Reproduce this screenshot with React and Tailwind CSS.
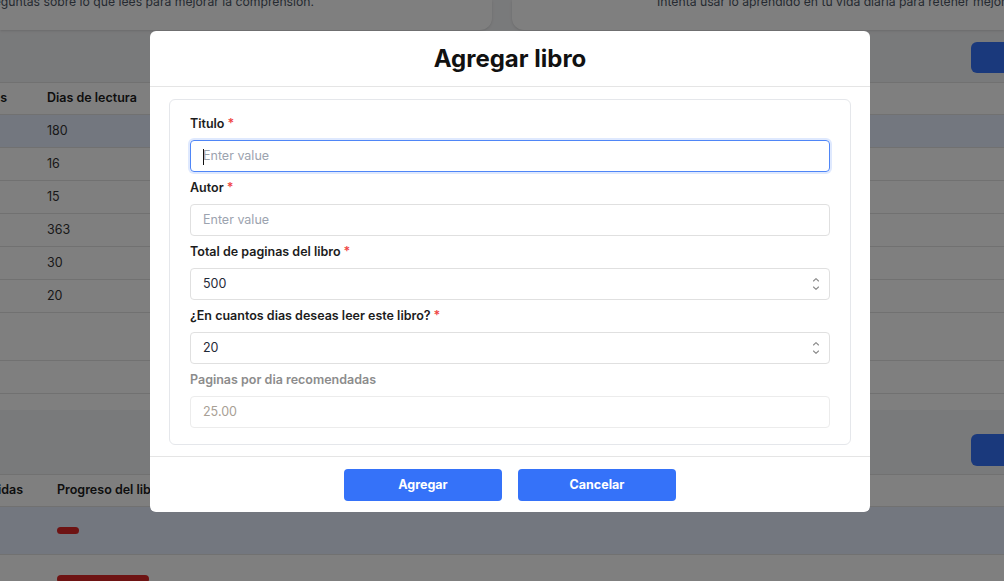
import React from "react";

function Spinner() {
  return (
    <svg width="8" height="14" viewBox="0 0 8 14" className="text-[#8a8a8a]" fill="none" stroke="currentColor" strokeWidth="1.1" strokeLinecap="round" strokeLinejoin="round">
      <path d="M1.5 4 L4 1.6 L6.5 4" />
      <path d="M1.5 10 L4 12.4 L6.5 10" />
    </svg>
  );
}

function Field({ label, required = true, muted = false, children }) {
  return (
    <div className="flex flex-col">
      <div className={`h-6 flex items-center mb-1 text-[12.5px] font-semibold ${muted ? "text-[#8c8c8c]" : "text-[#1c1c1c]"}`}>
        {label}
        {required && <span className="text-[#ef4444] ml-[3px]">*</span>}
      </div>
      {children}
    </div>
  );
}

function Row({ children, hl = false, h = "h-[33px]" }) {
  return (
    <div className={`${h} flex items-center border-b border-[#e3e3e3] ${hl ? "bg-[#e6eefe]" : "bg-white"}`}>
      {children}
    </div>
  );
}

export default function App() {
  const days = ["180", "16", "15", "363", "30", "20"];
  return (
    <div className="relative w-[1004px] h-[581px] overflow-hidden bg-[#f3f4f6] font-['Inter',_sans-serif]">
      {/* Background page */}
      <div className="flex flex-col">
        <div className="h-[30px] flex gap-5">
          <div className="w-[492px] h-[30px] bg-white rounded-br-xl shadow-sm flex justify-end pr-[178px] overflow-hidden">
            <div className="-mt-[6px] leading-4 text-[12.2px] text-[#4b5563] whitespace-nowrap">
              Haz preguntas sobre lo que lees para mejorar la comprensión.
            </div>
          </div>
          <div className="flex-1 h-[30px] bg-white rounded-bl-xl shadow-sm flex overflow-hidden pl-[145px]">
            <div className="-mt-[6px] leading-4 text-[12.2px] text-[#4b5563] whitespace-nowrap">
              Intenta usar lo aprendido en tu vida diaria para retener mejor
            </div>
          </div>
        </div>
        <div className="h-[52px] flex justify-end items-start pt-3">
          <div className="w-[33px] h-[31px] bg-[#3572f9] rounded-l-md" />
        </div>
        <div className="border-t border-[#e3e3e3] bg-white">
          <Row h="h-[32px]">
            <div className="w-[47px] overflow-hidden flex justify-end">
              <span className="whitespace-nowrap text-[12.5px] font-semibold text-[#1c1c1c] mr-[40px]">Paginas leidas</span>
            </div>
            <div className="text-[12.5px] font-semibold text-[#1c1c1c]">Dias de lectura</div>
          </Row>
          {days.map((d, i) => (
            <Row key={i} hl={i === 0}>
              <div className="w-[47px]" />
              <div className="text-[12.5px] text-[#333]">{d}</div>
            </Row>
          ))}
          <Row h="h-[48px]" />
          <Row />
          <div className="h-[16px] bg-white" />
        </div>
        <div className="h-[64px] flex justify-end items-start pt-[24px]">
          <div className="w-[33px] h-[32px] bg-[#3572f9] rounded-l-md" />
        </div>
        <div className="border-t border-[#e3e3e3] bg-white">
          <Row h="h-[32px]">
            <div className="w-[57px] overflow-hidden flex justify-end">
              <span className="whitespace-nowrap text-[12.5px] font-semibold text-[#1c1c1c] mr-[34px]">Paginas leidas</span>
            </div>
            <div className="text-[12.5px] font-semibold text-[#1c1c1c] whitespace-nowrap">Progreso del libro</div>
          </Row>
          <Row hl h="h-[48px]">
            <div className="w-[57px]" />
            <div className="w-[22px] h-[7px] rounded-full bg-[#dc2626]" />
          </Row>
          <div className="h-[40px] bg-white flex items-start pt-[20px]">
            <div className="w-[57px]" />
            <div className="w-[92px] h-[8px] rounded-full bg-[#dc2626]" />
          </div>
        </div>
      </div>

      {/* Overlay */}
      <div className="absolute inset-0 bg-black/50" />

      {/* Modal */}
      <div className="absolute left-[150px] top-[31px] w-[720px] h-[481px] bg-white rounded-md flex flex-col">
        <div className="h-[56px] flex items-center justify-center border-b border-[#e5e5e5]">
          <h2 className="text-[24px] font-bold text-[#111]">Agregar libro</h2>
        </div>
        <div className="pt-3 px-[19px] pb-[11px]">
          <div className="border border-[#e5e7eb] rounded-md pt-3 px-5 pb-4 flex flex-col gap-1">
            <Field label="Titulo">
              <div className="relative h-8 border border-[#4f86f7] rounded-[4px] shadow-[0_0_0_2px_rgba(79,134,247,0.18)] flex items-center px-3">
                <span className="absolute left-[12px] top-[8px] w-px h-[16px] bg-[#111]" />
                <span className="text-[12.5px] text-[#9ca3af]">Enter value</span>
              </div>
            </Field>
            <Field label="Autor">
              <div className="h-8 border border-[#e0e0e0] rounded-[4px] flex items-center px-3">
                <span className="text-[12.5px] text-[#9ca3af]">Enter value</span>
              </div>
            </Field>
            <Field label="Total de paginas del libro">
              <div className="h-8 border border-[#e0e0e0] rounded-[4px] flex items-center justify-between pl-3 pr-[9px]">
                <span className="text-[12.5px] text-[#1f2937]">500</span>
                <Spinner />
              </div>
            </Field>
            <Field label="¿En cuantos dias deseas leer este libro?">
              <div className="h-8 border border-[#e0e0e0] rounded-[4px] flex items-center justify-between pl-3 pr-[9px]">
                <span className="text-[12.5px] text-[#1f2937]">20</span>
                <Spinner />
              </div>
            </Field>
            <Field label="Paginas por dia recomendadas" required={false} muted>
              <div className="h-8 border border-[#ececec] rounded-[4px] flex items-center px-3">
                <span className="text-[12.5px] text-[#a8a095]">25.00</span>
              </div>
            </Field>
          </div>
        </div>
        <div className="flex-1 border-t border-[#e5e5e5] flex justify-center gap-4 pt-3">
          <button className="w-[158px] h-8 bg-[#3572f9] rounded-[4px] text-white text-[12.5px] font-bold">Agregar</button>
          <button className="w-[158px] h-8 bg-[#3572f9] rounded-[4px] text-white text-[12.5px] font-bold">Cancelar</button>
        </div>
      </div>
    </div>
  );
}
